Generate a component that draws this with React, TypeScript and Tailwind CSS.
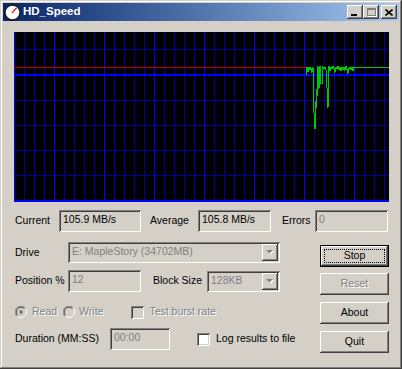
import type { ReactNode } from 'react';

const sunken =
  'shadow-[inset_1px_1px_#808080,inset_-1px_-1px_#ffffff,inset_2px_2px_#404040,inset_-2px_-2px_#d4d0c8]';
const raised =
  'shadow-[inset_-1px_-1px_#404040,inset_1px_1px_#ffffff,inset_-2px_-2px_#808080,inset_2px_2px_#d4d0c8]';
const disabledText = 'text-[#808080] [text-shadow:1px_1px_0_#ffffff]';

// green trace, page coordinates (graph origin at 14,32)
const trace: [number, number][] = [
  [306, 74], [306, 70], [307, 67], [308, 71], [309, 67], [310, 69], [311, 67], [312, 72],
  [313, 67], [313, 82], [314, 112], [315, 128], [315, 100], [316, 107], [316, 88], [317, 96],
  [318, 66], [319, 88], [320, 66], [320, 77], [321, 83], [322, 83], [322, 66], [324, 68],
  [325, 67], [326, 69], [327, 87], [328, 107], [329, 66], [330, 70], [331, 67], [332, 68],
  [333, 66], [334, 68], [335, 72], [336, 67], [337, 68], [338, 66], [339, 69], [340, 67],
  [341, 70], [342, 67], [343, 69], [344, 67], [345, 70], [346, 66], [347, 69], [348, 73],
  [349, 68], [350, 67], [351, 69], [352, 67], [353, 70], [354, 67], [389, 67],
];

function Graph() {
  const vLines = Array.from({ length: 38 }, (_, k) => k);
  const hLines = [17, 68, 93, 118, 143];
  return (
    <svg width={375} height={170} className="block" shapeRendering="crispEdges">
      <rect width={375} height={170} fill="#000000" />
      {vLines.map((k) => (
        <rect
          key={k}
          x={k * 10}
          y={0}
          width={1}
          height={170}
          fill={k === 0 || k % 5 === 4 ? '#0000ff' : '#00009c'}
        />
      ))}
      {hLines.map((y) => (
        <rect key={y} x={0} y={y} width={375} height={1} fill="#00009c" />
      ))}
      <rect x={0} y={42} width={375} height={2} fill="#0000ff" />
      <rect x={0} y={168} width={375} height={2} fill="#0000ff" />
      <rect x={0} y={35} width={293} height={1} fill="#c00000" />
      <polyline
        points={trace.map(([x, y]) => `${x - 14},${y - 32 + 0.5}`).join(' ')}
        fill="none"
        stroke="#00c800"
        strokeWidth={1}
      />
    </svg>
  );
}

function Edit({ w, value, grey }: { w: string; value: string; grey?: boolean }) {
  return (
    <div className={`${w} shrink-0 h-[22px] bg-[#d4d0c8] ${sunken} pl-[4px] pt-[3px] leading-[13px] ${grey ? 'text-[#808080]' : 'text-black'}`}>
      {value}
    </div>
  );
}

function Arrow() {
  return (
    <svg width={8} height={5} className="block">
      <path d="M1 1h7L4.5 4.5z" fill="#ffffff" />
      <path d="M0 0h7L3.5 3.5z" fill="#808080" />
    </svg>
  );
}

function Combo({ w, value }: { w: string; value: string }) {
  return (
    <div className={`${w} shrink-0 h-[21px] bg-[#d4d0c8] ${sunken} p-[2px] flex`}>
      <div className="flex-1 pl-[2px] pt-[1px] leading-[13px] text-[#808080] whitespace-nowrap overflow-hidden">{value}</div>
      <div className={`w-[16px] h-[17px] ${raised} flex items-center justify-center`}>
        <Arrow />
      </div>
    </div>
  );
}

function Button({ children, mt, h, disabled, isDefault }: { children: ReactNode; mt: string; h: string; disabled?: boolean; isDefault?: boolean }) {
  if (isDefault) {
    return (
      <div className={`${mt} ${h} w-[69px] border border-black`}>
        <div className={`h-full ${raised} p-[3px]`}>
          <div className="h-full border border-dotted border-black flex items-center justify-center">{children}</div>
        </div>
      </div>
    );
  }
  return (
    <div className={`${mt} ${h} w-[69px] ${raised} flex items-center justify-center ${disabled ? disabledText : 'text-black'}`}>
      {children}
    </div>
  );
}

function Radio({ checked }: { checked?: boolean }) {
  return (
    <svg width={12} height={12} className="block">
      <circle cx={6} cy={6} r={5.5} fill="none" stroke="#ffffff" />
      <path d="M1.8 10.2A5.5 5.5 0 0 1 10.2 1.8" fill="none" stroke="#808080" />
      <circle cx={6} cy={6} r={4.5} fill="#d4d0c8" stroke="#d4d0c8" />
      <path d="M2.6 9.4A4.5 4.5 0 0 1 9.4 2.6" fill="none" stroke="#404040" />
      {checked && <circle cx={6} cy={6} r={2} fill="#808080" />}
    </svg>
  );
}

function Check({ white }: { white?: boolean }) {
  return <div className={`w-[13px] h-[13px] shrink-0 ${sunken} ${white ? 'bg-white' : 'bg-[#d4d0c8]'}`} />;
}

function TitleButton({ children }: { children: ReactNode }) {
  return <div className={`w-[16px] h-[14px] bg-[#d4d0c8] ${raised} flex items-center justify-center`}>{children}</div>;
}

function Label({ w, children, className = '' }: { w: string; children: ReactNode; className?: string }) {
  return <span className={`${w} shrink-0 whitespace-nowrap ${className}`}>{children}</span>;
}

export default function App() {
  return (
    <div className="w-[402px] h-[369px] overflow-hidden bg-[#d4d0c8] p-[3px] shadow-[inset_-1px_-1px_#404040,inset_1px_1px_#d4d0c8,inset_-2px_-2px_#808080,inset_2px_2px_#ffffff] font-['Liberation_Sans',Arial,sans-serif] text-[10.5px] text-black select-none">
      {/* title bar */}
      <div className="h-[18px] bg-linear-to-r from-[#0a246a] to-[#a6caf0] flex items-center">
        <svg width={17} height={17} className="ml-[1px] block">
          <circle cx={8.5} cy={8.5} r={7.5} fill="#ffffff" stroke="#1a1a1a" strokeWidth={1.3} />
          <path d="M8 9L12.5 4" stroke="#e02020" strokeWidth={1.3} />
        </svg>
        <span className="ml-[2px] text-white font-bold text-[11.5px] leading-none">HD_Speed</span>
        <div className="ml-auto mr-[2px] flex">
          <TitleButton>
            <div className="w-[6px] h-[2px] bg-black mt-[6px] mr-[2px]" />
          </TitleButton>
          <TitleButton>
            <div className="w-[9px] h-[8px] border border-t-2 border-[#808080] shadow-[1px_1px_#ffffff]" />
          </TitleButton>
          <div className="ml-[2px]">
            <TitleButton>
              <svg width={8} height={7} className="block">
                <path d="M0.5 0.5L7.5 6.5M7.5 0.5L0.5 6.5" stroke="#000000" strokeWidth={1.6} />
              </svg>
            </TitleButton>
          </div>
        </div>
      </div>

      {/* client area */}
      <div className="pl-[11px] pt-[11px]">
        <Graph />

        <div className="mt-[8px] flex items-center h-[22px]">
          <Label w="w-[45px]" className="pl-[1px]">Current</Label>
          <Edit w="w-[82px]" value="105.9 MB/s" />
          <Label w="w-[48px]" className="ml-[9px]">Average</Label>
          <Edit w="w-[73px]" value="105.8 MB/s" />
          <Label w="w-[34px]" className="ml-[10px] pl-[1px]">Errors</Label>
          <Edit w="w-[73px]" value="0" grey />
        </div>

        <div className="mt-[10px] flex">
          <div className="w-[266px] shrink-0">
            <div className="h-[21px] flex items-center">
              <Label w="w-[54px]" className="pl-[1px]">Drive</Label>
              <Combo w="w-[212px]" value="E: MapleStory (34702MB)" />
            </div>
            <div className="mt-[7px] h-[22px] flex items-center">
              <Label w="w-[54px]" className="pl-[1px]">Position %</Label>
              <Edit w="w-[73px]" value="12" grey />
              <Label w="w-[66px]" className="pl-[12px]">Block Size</Label>
              <Combo w="w-[73px]" value="128KB" />
            </div>
            <div className="mt-[12px] h-[16px] flex items-center whitespace-nowrap">
              <div className="ml-[1px]">
                <Radio checked />
              </div>
              <span className={`ml-[5px] ${disabledText}`}>Read</span>
              <div className="ml-[6px]">
                <Radio />
              </div>
              <span className={`ml-[4px] ${disabledText}`}>Write</span>
              <div className="ml-[28px]">
                <Check />
              </div>
              <span className={`ml-[5px] ${disabledText}`}>Test burst rate</span>
            </div>
            <div className="mt-[8px] h-[22px] flex items-center whitespace-nowrap">
              <Label w="w-[96px]" className="pl-[1px]">Duration (MM:SS)</Label>
              <Edit w="w-[60px]" value="00:00" grey />
              <div className="ml-[27px]">
                <Check white />
              </div>
              <span className="ml-[6px]">Log results to file</span>
            </div>
          </div>

          <div className="ml-[40px] flex flex-col shrink-0">
            <Button mt="mt-[3px]" h="h-[22px]" isDefault>
              Stop
            </Button>
            <Button mt="mt-[6px]" h="h-[22px]" disabled>
              Reset
            </Button>
            <Button mt="mt-[7px]" h="h-[22px]">
              About
            </Button>
            <Button mt="mt-[7px]" h="h-[22px]">
              Quit
            </Button>
          </div>
        </div>
      </div>
    </div>
  );
}
